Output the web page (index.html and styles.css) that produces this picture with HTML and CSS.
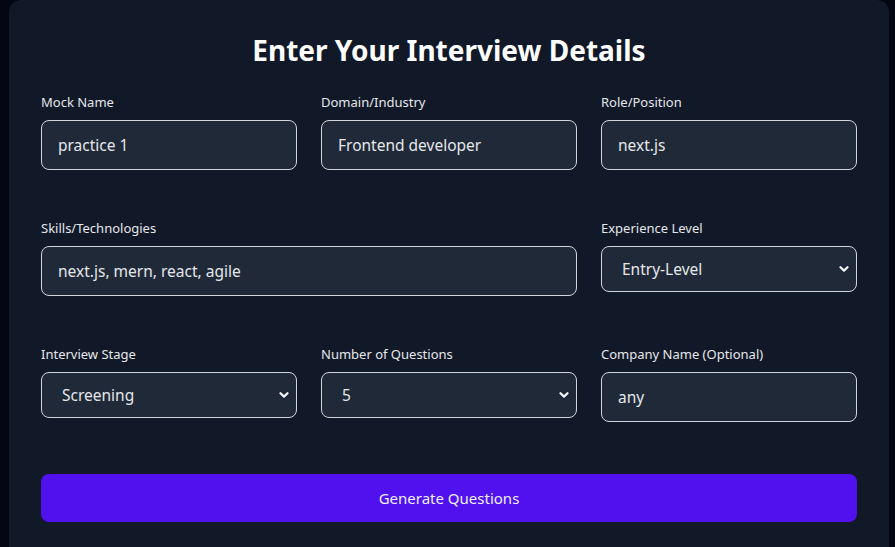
FILE: index.html
```html
<!DOCTYPE html>
<html lang="en">
<head>
<meta charset="utf-8">
<title>Enter Your Interview Details</title>
<link rel="stylesheet" href="styles.css">
</head>
<body>
<main class="page">
  <form class="card">
    <h1 class="title">Enter Your Interview Details</h1>
    <div class="grid">
      <div class="field">
        <label class="label">Mock Name</label>
        <input class="control" type="text" value="practice 1">
      </div>
      <div class="field">
        <label class="label">Domain/Industry</label>
        <input class="control" type="text" value="Frontend developer">
      </div>
      <div class="field">
        <label class="label">Role/Position</label>
        <input class="control" type="text" value="next.js">
      </div>
      <div class="field span2">
        <label class="label">Skills/Technologies</label>
        <input class="control" type="text" value="next.js, mern, react, agile">
      </div>
      <div class="field">
        <label class="label">Experience Level</label>
        <select class="control select"><option>Entry-Level</option></select>
      </div>
      <div class="field">
        <label class="label">Interview Stage</label>
        <select class="control select"><option>Screening</option></select>
      </div>
      <div class="field">
        <label class="label">Number of Questions</label>
        <select class="control select"><option>5</option></select>
      </div>
      <div class="field">
        <label class="label">Company Name (Optional)</label>
        <input class="control" type="text" value="any">
      </div>
    </div>
    <button class="submit" type="button">Generate Questions</button>
  </form>
</main>
</body>
</html>
```

FILE: styles.css
```css
* { box-sizing: border-box; }
html, body { margin: 0; padding: 0; }
body {
  background: #030712;
  font-family: "Noto Sans", "Open Sans", sans-serif;
  color: #f3f4f6;
  height: 547px;
  overflow: hidden;
}
.page {
  padding: 0 6px 0 9px;
}
.card {
  background: #111827;
  border-radius: 12px;
  padding: 32px 32px 40px;
  min-height: 560px;
}
.title {
  margin: 0 0 24px;
  text-align: center;
  font-size: 28px;
  line-height: 36px;
  font-weight: 700;
  color: #ffffff;
}
.grid {
  display: grid;
  grid-template-columns: repeat(3, 1fr);
  column-gap: 24px;
  row-gap: 48px;
  align-items: start;
}
.span2 { grid-column: span 2; }
.field {
  display: flex;
  flex-direction: column;
}
.label {
  font-size: 13px;
  line-height: 20px;
  margin-bottom: 8px;
  color: #e5e7eb;
}
.control {
  height: 50px;
  background: #1f2937;
  border: 1px solid #d1d5db;
  border-radius: 8px;
  color: #e5e7eb;
  font-family: inherit;
  font-size: 15.5px;
  padding: 0 16px;
  outline: none;
  width: 100%;
}
.select {
  height: 46px;
  appearance: none;
  -webkit-appearance: none;
  padding: 0 20px;
  background-image: url("data:image/svg+xml,%3Csvg xmlns='http://www.w3.org/2000/svg' width='10' height='8' viewBox='0 0 10 8'%3E%3Cpath d='M1.5 2.2 L5 5.6 L8.5 2.2' fill='none' stroke='%23f3f4f6' stroke-width='2.2' stroke-linecap='round' stroke-linejoin='round'/%3E%3C/svg%3E");
  background-repeat: no-repeat;
  background-position: right 7px center;
  background-size: 10px 8px;
}
.submit {
  margin-top: 52px;
  width: 100%;
  height: 48px;
  border: none;
  border-radius: 8px;
  background: #5111ef;
  color: #eef0ff;
  font-family: inherit;
  font-size: 15px;
}
```
